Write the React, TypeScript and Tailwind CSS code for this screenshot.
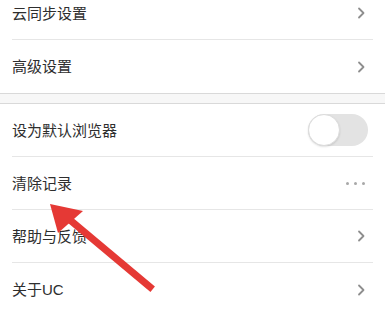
import { ReactNode } from 'react'

function Chevron() {
  return (
    <svg width="10" height="14" viewBox="0 0 10 14" className="mr-[7px]">
      <path d="M3 2.5 L7.5 7 L3 11.5" fill="none" stroke="#8e8e8e" strokeWidth="1.8" strokeLinecap="round" strokeLinejoin="round" />
    </svg>
  )
}

function Dots() {
  return (
    <div className="flex gap-[5px] mr-[8px]">
      <span className="w-[3px] h-[3px] rounded-full bg-[#a8a8a8]" />
      <span className="w-[3px] h-[3px] rounded-full bg-[#a8a8a8]" />
      <span className="w-[3px] h-[3px] rounded-full bg-[#a8a8a8]" />
    </div>
  )
}

function Toggle() {
  return (
    <div className="w-[60px] h-[32px] rounded-full bg-[#e3e3e3] relative mr-[5px]">
      <div className="absolute left-0 top-0 w-[32px] h-[32px] rounded-full bg-white border border-[#dcdcdc] shadow-[0_1px_2px_rgba(0,0,0,0.12)]" />
    </div>
  )
}

function Row({ label, right, divider = true }: { label: string; right: ReactNode; divider?: boolean }) {
  return (
    <div className="pl-[12px] pr-[12px]">
      <div className={`h-[53px] flex items-center justify-between ${divider ? 'border-b border-[#e6e6e6]' : ''}`}>
        <span className="text-[15px] text-[#2e2e2e] leading-none">{label}</span>
        {right}
      </div>
    </div>
  )
}

export default function App() {
  return (
    <div
      className="w-[385px] h-[315px] bg-white overflow-hidden relative"
      style={{ fontFamily: '"Liberation Sans", "Noto Sans CJK SC", sans-serif' }}
    >
      <div className="-mt-[13px]">
        <Row label="云同步设置" right={<Chevron />} />
        <Row label="高级设置" right={<Chevron />} divider={false} />
        <div className="h-[11px] bg-[#f7f7f7] border-y border-[#d9d9d9]" />
        <Row label="设为默认浏览器" right={<Toggle />} />
        <Row label="清除记录" right={<Dots />} />
        <Row label="帮助与反馈" right={<Chevron />} />
        <Row label="关于UC" right={<Chevron />} divider={false} />
      </div>

      {/* 红色箭头 */}
      <svg className="absolute left-0 top-0 pointer-events-none" width="385" height="315">
        <line x1="150" y1="287" x2="70" y2="220" stroke="#e53935" strokeWidth="7" strokeLinecap="square" />
        <polygon points="50,204 83,211 58,233" fill="#e53935" />
      </svg>
    </div>
  )
}
